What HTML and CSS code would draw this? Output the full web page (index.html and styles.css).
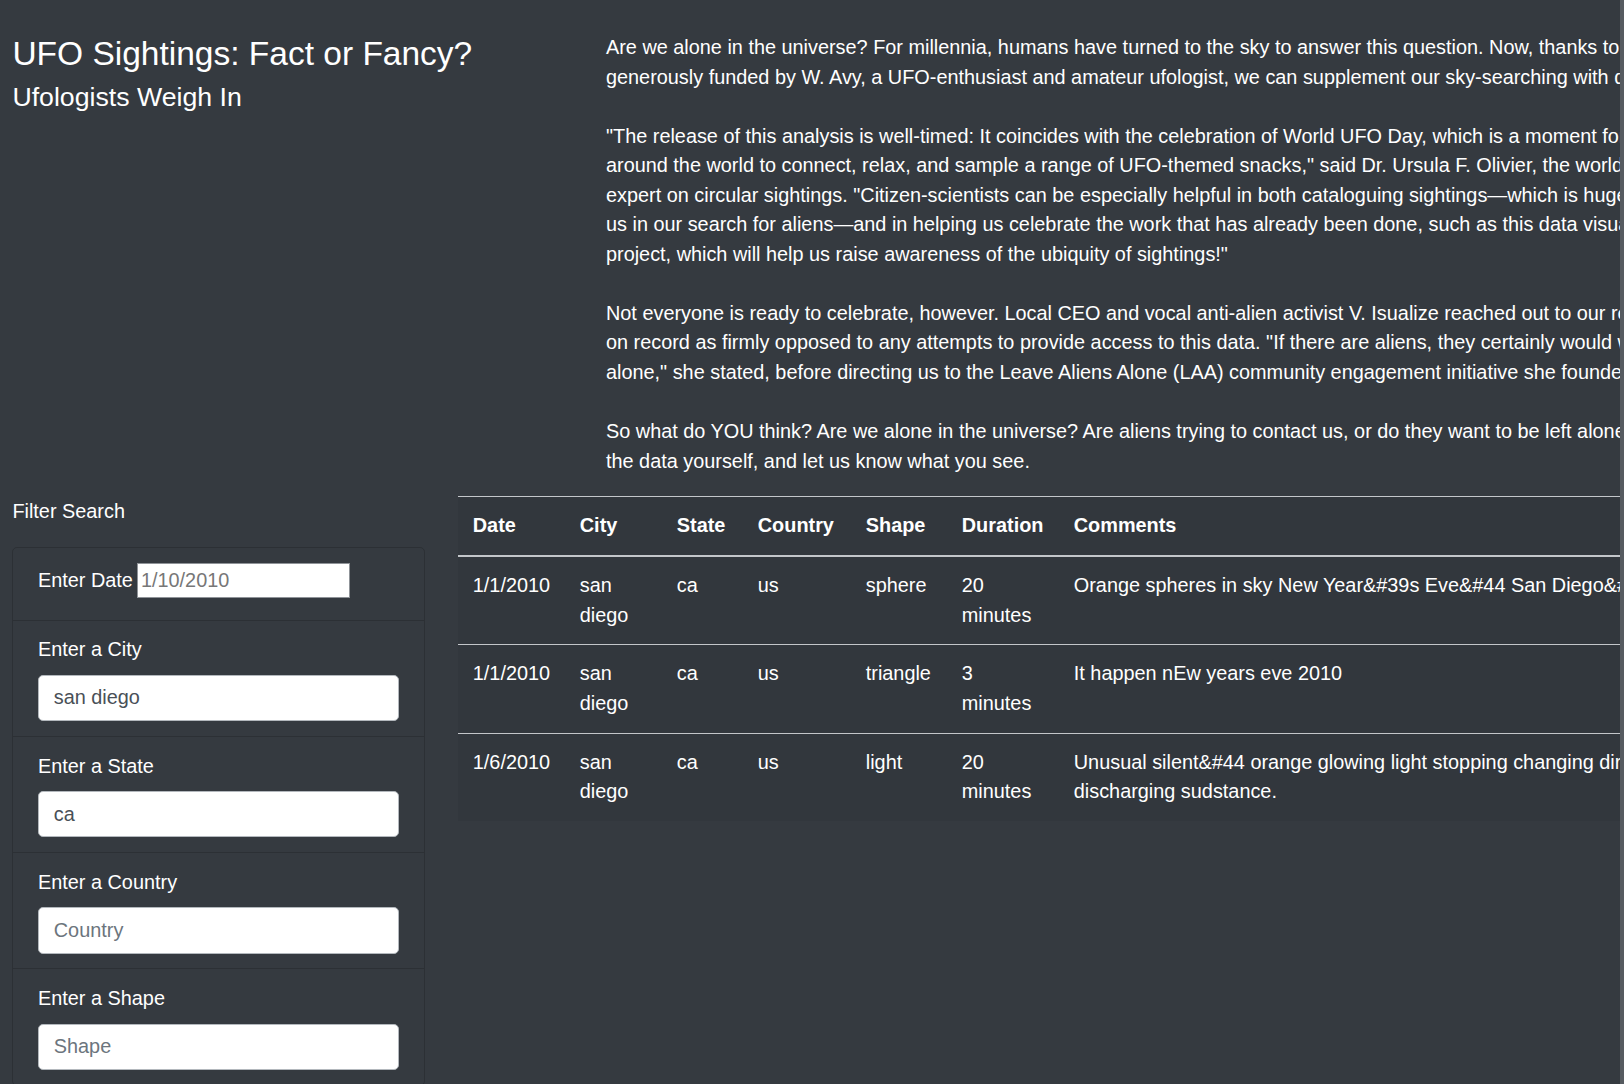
FILE: index.html
```html
<!DOCTYPE html>
<html lang="en">
<head>
<meta charset="utf-8">
<title>UFO Sightings: Fact or Fancy?</title>
<link rel="stylesheet" href="styles.css">
</head>
<body>
<div class="viewport">
  <div class="page">
    <div class="top-row">
      <header class="intro">
        <h1 class="title">UFO Sightings: Fact or Fancy?</h1>
        <h2 class="subtitle">Ufologists Weigh In</h2>
      </header>
      <article class="story">
        <p>Are we alone in the universe? For millennia, humans have turned to the sky to answer this question. Now, thanks to a new initiative<br>generously funded by W. Avy, a UFO-enthusiast and amateur ufologist, we can supplement our sky-searching with data-searching.</p>
        <p>"The release of this analysis is well-timed: It coincides with the celebration of World UFO Day, which is a moment for people<br>around the world to connect, relax, and sample a range of UFO-themed snacks," said Dr. Ursula F. Olivier, the world's foremost<br>expert on circular sightings. "Citizen-scientists can be especially helpful in both cataloguing sightings—which is hugely helpful to<br>us in our search for aliens—and in helping us celebrate the work that has already been done, such as this data visualization<br>project, which will help us raise awareness of the ubiquity of sightings!"</p>
        <p>Not everyone is ready to celebrate, however. Local CEO and vocal anti-alien activist V. Isualize reached out to our reporters to go<br>on record as firmly opposed to any attempts to provide access to this data. "If there are aliens, they certainly would want to be left<br>alone," she stated, before directing us to the Leave Aliens Alone (LAA) community engagement initiative she founded last year.</p>
        <p>So what do YOU think? Are we alone in the universe? Are aliens trying to contact us, or do they want to be left alone? Dig through<br>the data yourself, and let us know what you see.</p>
      </article>
    </div>
    <div class="bottom-row">
      <aside class="filters">
        <p class="filter-title">Filter Search</p>
        <form>
          <ul class="filter-list">
            <li class="filter-item date-item">
              <label class="date-label" for="datetime">Enter Date</label>
              <input class="date-input" id="datetime" type="text" placeholder="1/10/2010">
            </li>
            <li class="filter-item">
              <label class="filter-label" for="city">Enter a City</label>
              <input class="filter-input" id="city" type="text" value="san diego">
            </li>
            <li class="filter-item">
              <label class="filter-label" for="state">Enter a State</label>
              <input class="filter-input" id="state" type="text" value="ca">
            </li>
            <li class="filter-item">
              <label class="filter-label" for="country">Enter a Country</label>
              <input class="filter-input" id="country" type="text" placeholder="Country">
            </li>
            <li class="filter-item">
              <label class="filter-label" for="shape">Enter a Shape</label>
              <input class="filter-input" id="shape" type="text" placeholder="Shape">
            </li>
          </ul>
        </form>
      </aside>
      <section class="results">
        <table class="sightings">
          <colgroup>
            <col class="c-date"><col class="c-city"><col class="c-state"><col class="c-country"><col class="c-shape"><col class="c-duration"><col class="c-comments">
          </colgroup>
          <thead>
            <tr><th>Date</th><th>City</th><th>State</th><th>Country</th><th>Shape</th><th>Duration</th><th>Comments</th></tr>
          </thead>
          <tbody>
            <tr><td>1/1/2010</td><td>san diego</td><td>ca</td><td>us</td><td>sphere</td><td>20 minutes</td><td class="comment">Orange spheres in sky New Year&amp;#39s Eve&amp;#44 San Diego&amp;#44 CA</td></tr>
            <tr><td>1/1/2010</td><td>san diego</td><td>ca</td><td>us</td><td>triangle</td><td>3 minutes</td><td class="comment">It happen nEw years eve 2010</td></tr>
            <tr><td>1/6/2010</td><td>san diego</td><td>ca</td><td>us</td><td>light</td><td>20 minutes</td><td class="comment">Unusual silent&amp;#44 orange glowing light stopping changing directions&amp;#44<br>discharging sudstance.</td></tr>
          </tbody>
        </table>
      </section>
    </div>
  </div>
</div>
<div class="edge"></div>
</body>
</html>
```

FILE: styles.css
```css
html, body {
  height: 100%;
  margin: 0;
}

body {
  display: flex;
  overflow: hidden;
  background: #353a40;
  color: #fff;
  font-family: "Liberation Sans", Arial, sans-serif;
  font-size: 19.88px;
  line-height: 29.55px;
}

.viewport {
  flex: 1;
  min-width: 0;
  overflow: hidden;
}

.edge {
  width: 4px;
  flex: none;
  background: #565b60;
}

.page {
  width: 1781px;
  padding-top: 33px;
}

.top-row {
  display: grid;
  grid-template-columns: 593.6px 1fr;
}

.intro {
  padding: 0 12.4px;
}

.title {
  margin: 0 0 7px;
  font-size: 33.5px;
  line-height: 41.4px;
  font-weight: 400;
}

.subtitle {
  margin: 0;
  font-size: 26.7px;
  line-height: 32px;
  font-weight: 400;
}

.story {
  padding: 0 12.4px;
}

.story p {
  margin: 0 0 29.55px;
  white-space: nowrap;
}

.story p:last-child {
  margin-bottom: 19.7px;
}

.bottom-row {
  display: grid;
  grid-template-columns: 445.6px 1fr;
}

.filters {
  padding: 0 21px 0 12.4px;
}

.filter-title {
  margin: 0 0 19.7px;
  line-height: 31px;
}

.filters form {
  margin: 0;
}

.filter-list {
  list-style: none;
  margin: 0;
  padding: 0;
  border: 1px solid rgba(0, 0, 0, 0.16);
  border-radius: 5px;
}

.filter-item {
  padding: 14.8px 24.6px;
  border-top: 1px solid rgba(0, 0, 0, 0.16);
}

.filter-item:first-child {
  border-top: 0;
}

.date-item {
  display: flex;
  align-items: center;
  column-gap: 4px;
  padding-top: 15.5px;
  padding-bottom: 21.5px;
}

.date-label {
  line-height: 35px;
}

.date-input {
  width: 213px;
  height: 35px;
  box-sizing: border-box;
  margin: 0;
  padding: 0 3px;
  border: 1px solid #8f9398;
  border-radius: 0;
  background: #fff;
  color: #6f6f6f;
  font: inherit;
}

.date-input::placeholder {
  color: #777;
}

.filter-label {
  display: block;
  margin-bottom: 9.85px;
}

.filter-input {
  display: block;
  width: 100%;
  height: 46.3px;
  box-sizing: border-box;
  margin: 0;
  padding: 7.4px 14.8px;
  border: 1px solid #b3b8bd;
  border-radius: 5px;
  background: #fff;
  color: #495057;
  font: inherit;
}

.filter-input::placeholder {
  color: #6c757d;
  opacity: 1;
}

.results {
  padding: 0 12.4px;
}

.sightings {
  width: 100%;
  table-layout: fixed;
  border-collapse: collapse;
  background: #32373d;
  color: #fff;
}

.c-date { width: 107px; }
.c-city { width: 97px; }
.c-state { width: 81px; }
.c-country { width: 108px; }
.c-shape { width: 96px; }
.c-duration { width: 112px; }

.sightings th,
.sightings td {
  padding: 14.2px 14.8px;
  text-align: left;
  vertical-align: top;
  border-top: 1px solid #c3c6ca;
}

.sightings thead th {
  font-weight: 700;
  vertical-align: bottom;
  border-bottom: 2px solid #c3c6ca;
}

.sightings .comment {
  white-space: nowrap;
}
```
